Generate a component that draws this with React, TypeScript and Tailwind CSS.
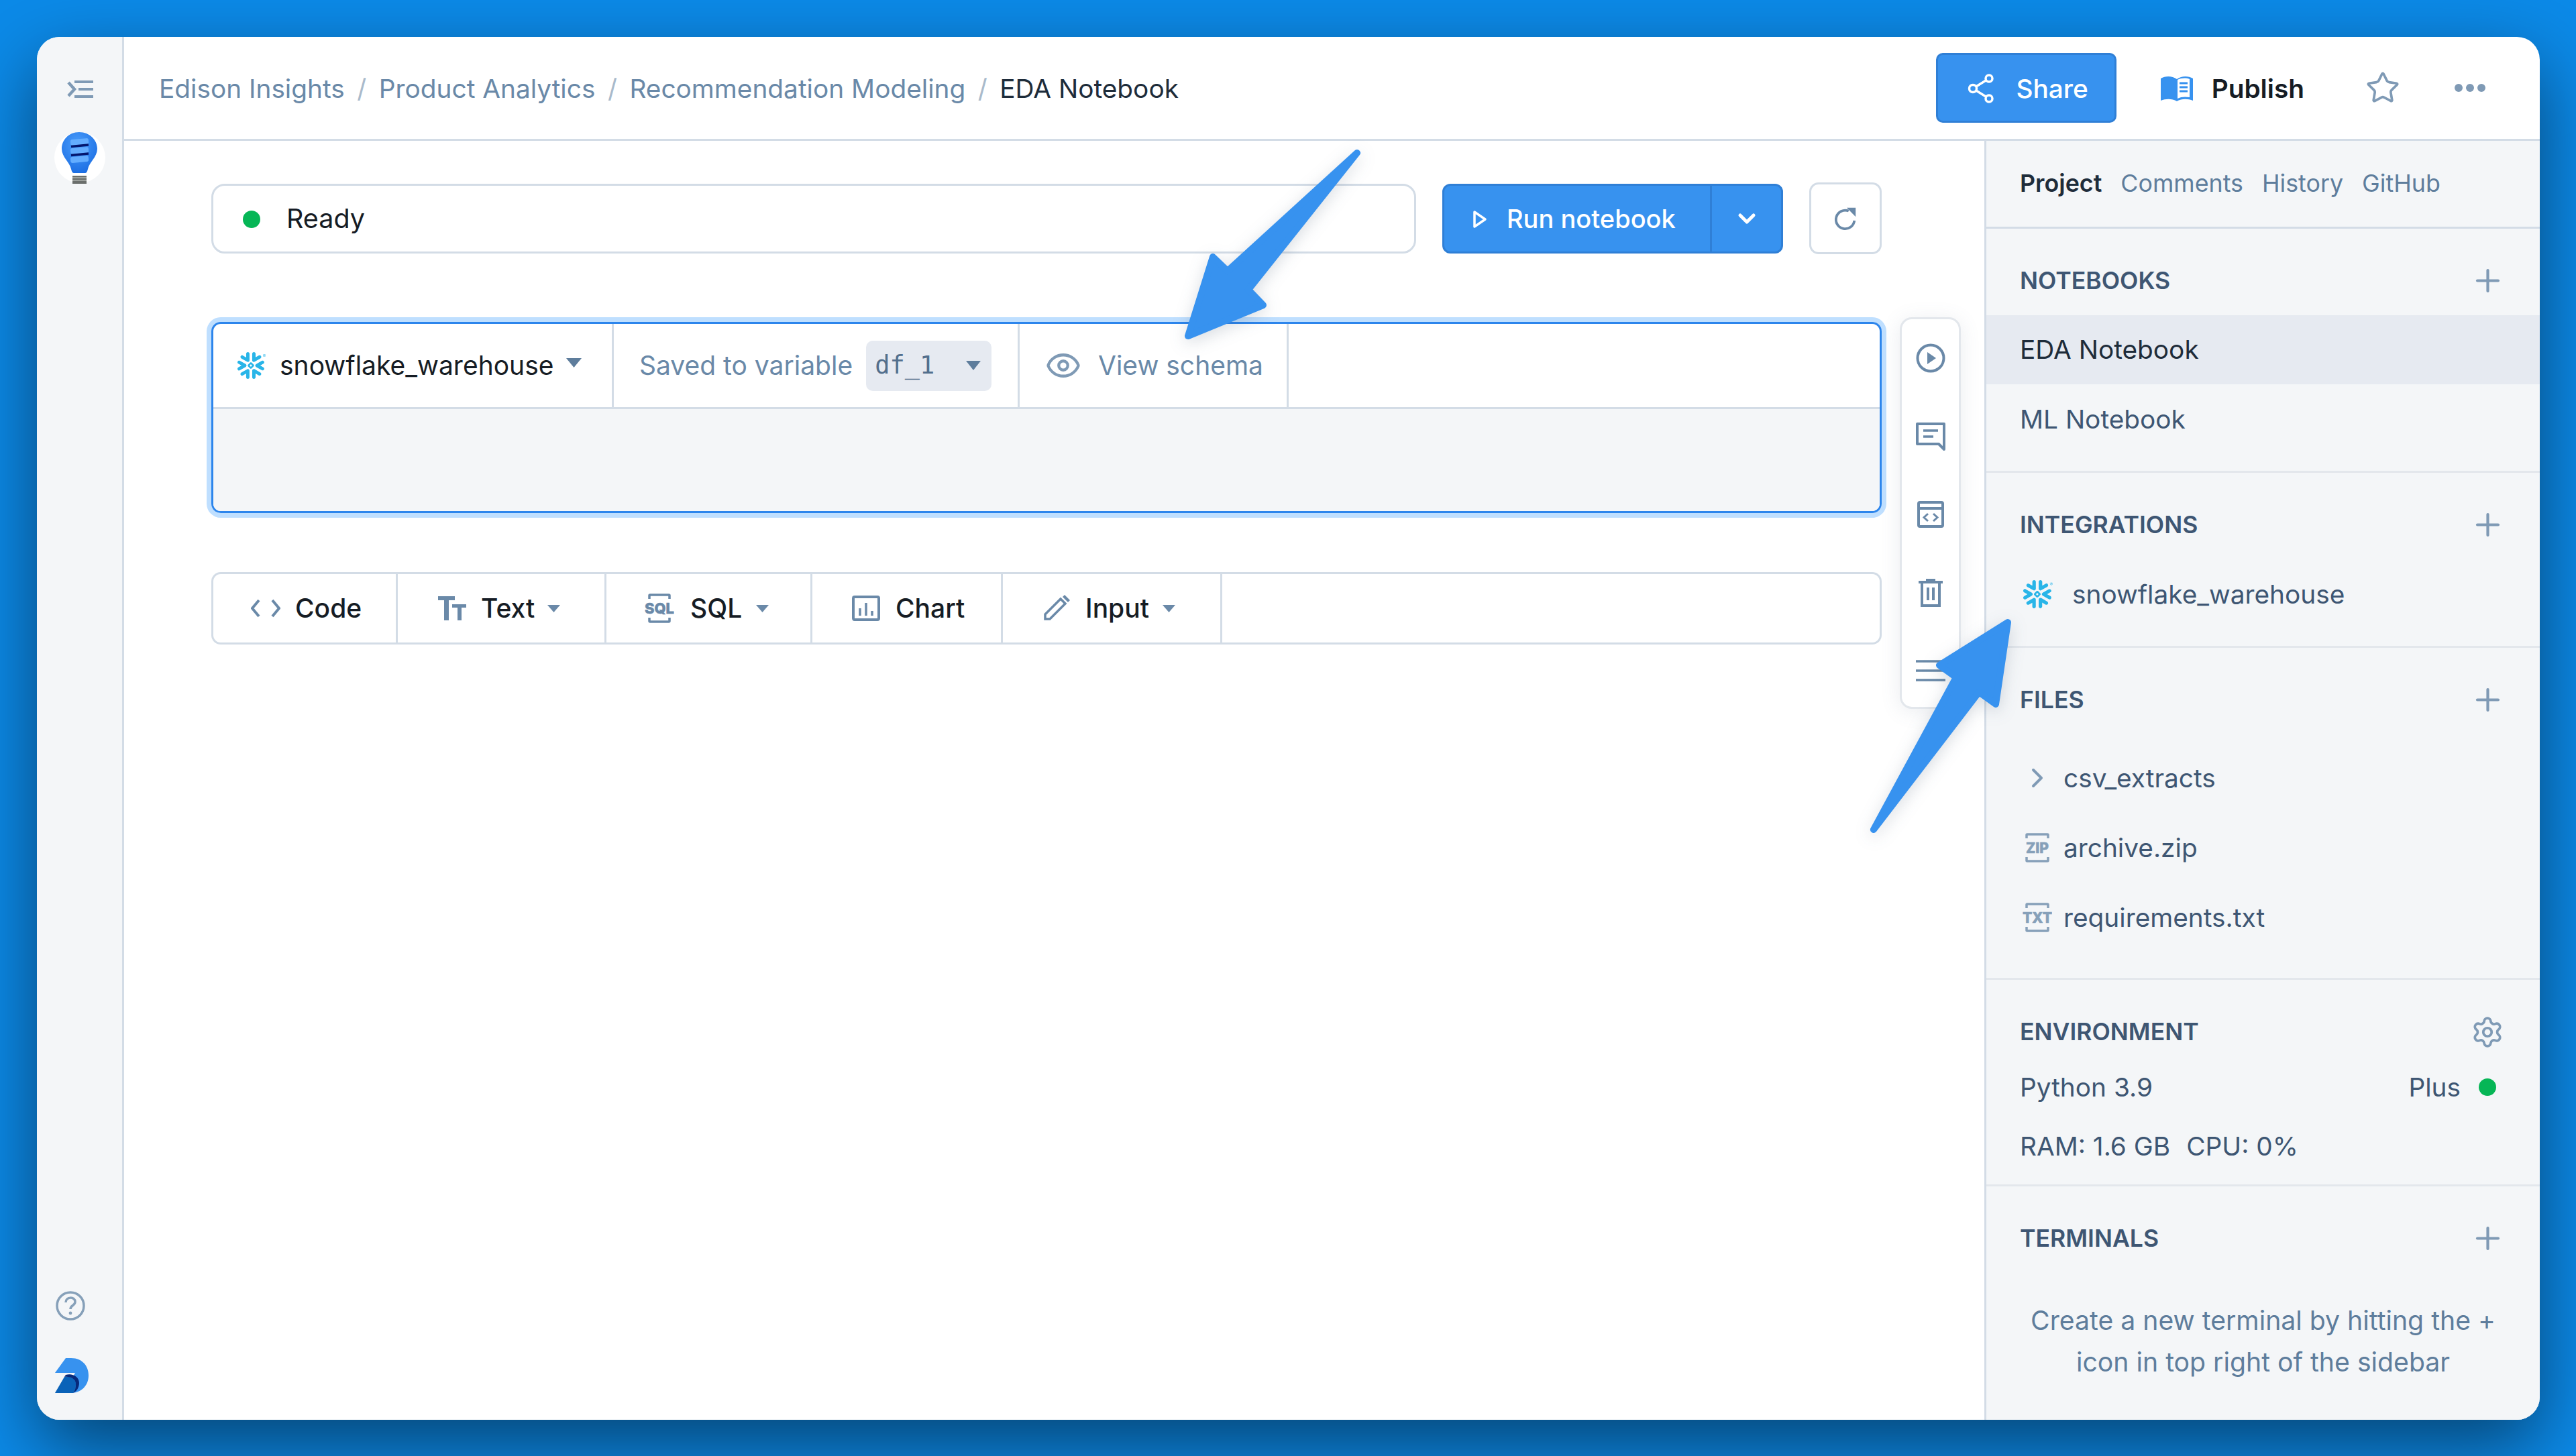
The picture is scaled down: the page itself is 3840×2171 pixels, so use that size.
import React from "react";
import { ChevronDown, ChevronRight, Eye, Plus, Settings, Star } from "lucide-react";
import { SiSnowflake } from "react-icons/si";

const Caret = ({ className }: { className: string }) => (
  <svg viewBox="0 0 10 8" preserveAspectRatio="none" className={className}>
    <path d="M0 0h10L5 8z" fill="currentColor" />
  </svg>
);

const Bulb = () => (
  <svg viewBox="0 0 80 80" className="h-[80px] w-[80px]">
    <defs>
      <radialGradient id="bulb" cx="0.45" cy="0.3" r="0.8">
        <stop offset="0" stopColor="#4a9dfb" />
        <stop offset="1" stopColor="#1668e0" />
      </radialGradient>
    </defs>
    <circle cx="40" cy="39" r="38" fill="#ffffff" />
    <path d="M39 1C23 1 13 13 13 26c0 12 12 20 14 30 1 4 2 6 4 6h17c2 0 3-2 4-6 2-10 14-18 14-30C66 13 55 1 39 1z" fill="url(#bulb)" />
    <rect x="26" y="11" width="27" height="9" rx="3" transform="rotate(-5 40 15)" fill="#63adff" />
    <rect x="26" y="24" width="27" height="9" rx="3" transform="rotate(-5 40 28)" fill="#63adff" />
    <rect x="26" y="37" width="27" height="9" rx="3" transform="rotate(-5 40 41)" fill="#63adff" />
    <path d="M27 22.500l26-2.500M27 35.500l26-2.500" stroke="#04176e" strokeWidth="3.5" />
    <rect x="29" y="66" width="21" height="12" fill="#6b6f6c" />
    <path d="M29 69h21M29 73h21" stroke="#aeb2ad" strokeWidth="1.5" />
  </svg>
);

const Logo = () => (
  <svg viewBox="0 0 50 52" className="h-[52px] w-[50px]">
    <path d="M16 0h8c15 0 26 10 26 26 0 15-11 26-26 26h-6l-2-5 14-25H0z" fill="#3792ef" />
    <path d="M0 52l14-24c8-2 17 2 17 11 0 6-2 10-4 13z" fill="#0a62b8" />
    <path d="M16 25c9-3 20 2 20 12 0 7-4 13-9 15 3-4 4-8 4-13 0-9-9-12-17-11z" fill="#07297a" />
  </svg>
);

const FileTag = ({ label, len }: { label: string; len: number }) => (
  <svg viewBox="0 0 44 44" className="h-[44px] w-[44px]">
    <path d="M6 8V3q0-1 1-1h30q1 0 1 1v5M6 36v5q0 1 1 1h30q1 0 1-1v-5" fill="none" stroke="currentColor" strokeWidth="3.5" />
    <text
      x="22"
      y="29.5"
      textAnchor="middle"
      textLength={len}
      lengthAdjust="spacingAndGlyphs"
      fontFamily="Inter, sans-serif"
      fontWeight="800"
      fontSize="21"
      fill="currentColor"
      stroke="currentColor"
      strokeWidth="0.6"
    >
      {label}
    </text>
  </svg>
);

const SectionHead = ({ title, icon }: { title: string; icon?: React.ReactNode }) => (
  <div className="flex h-[129px] items-center justify-between pt-[26px] pr-[51px] pl-[50px]">
    <span className="text-[35.6px] font-semibold text-[#3e5673]">{title}</span>
    {icon ?? <Plus className="h-[53px] w-[53px] text-[#7f9ab5]" strokeWidth={1.9} />}
  </div>
);

const ToolItem = ({ w, pad, icon, label, caret }: { w: string; pad: string; icon: React.ReactNode; label: string; caret?: boolean }) => (
  <div className={`${w} ${pad} flex h-full items-center border-r-[3px] border-[#d3dce6]`}>
    <span className="flex items-center text-[#6a89a8]">{icon}</span>
    <span className="text-[39px] font-medium text-[#161c24]">{label}</span>
    {caret && <Caret className="-ml-[3px] h-[11px] w-[19px] text-[#6a89a8]" />}
  </div>
);

export default function App() {
  return (
    <div className="relative h-[2171px] w-[3840px] overflow-hidden bg-[#0c8ae8] pt-[55px] pl-[55px] font-[Inter,sans-serif]">
      <div className="flex h-[2062px] w-[3731px] overflow-hidden rounded-[34px] bg-white shadow-[0_40px_110px_rgba(0,0,0,0.5)]">
        {/* left rail */}
        <div className="flex w-[130px] shrink-0 flex-col items-center border-r-[3px] border-[#d3dce6] bg-[#f4f6f8] pt-[65px] pb-[40px]">
          <svg viewBox="0 0 40 26" className="h-[26px] w-[40px] text-[#7f9ab5]">
            <path d="M3 3l9 10-9 10" fill="none" stroke="currentColor" strokeWidth="4.5" />
            <path d="M12 2h28M18 13h22M12 24h28" stroke="currentColor" strokeWidth="4" />
          </svg>
          <div className="mt-[50px]">
            <Bulb />
          </div>
          <svg viewBox="0 0 44 44" className="mt-auto ml-[28px] h-[44px] w-[44px] self-start text-[#86a0b9]">
            <circle cx="22" cy="22" r="20" fill="none" stroke="currentColor" strokeWidth="3.5" />
            <path d="M15 17c0-9 14-9 14-1 0 6-7 5-7 11" fill="none" stroke="currentColor" strokeWidth="3.5" />
            <circle cx="22" cy="33" r="2.4" fill="currentColor" />
          </svg>
          <div className="mt-[56px] ml-[27px] self-start">
            <Logo />
          </div>
        </div>

        <div className="flex min-w-0 flex-1 flex-col">
          {/* header */}
          <div className="flex h-[155px] shrink-0 items-center border-b-[3px] border-[#d3dce6] pr-[81px] pl-[52px] text-[38.8px] text-[#6a89a8]">
            <div className="flex items-center pt-[3px]">
              <span>Edison Insights</span>
              <span className="mx-[18.5px] text-[#a9bacb]">/</span>
              <span>Product Analytics</span>
              <span className="mx-[18.5px] text-[#a9bacb]">/</span>
              <span>Recommendation Modeling</span>
              <span className="mx-[18.5px] text-[#a9bacb]">/</span>
              <span className="text-[#1e2c3a]">EDA Notebook</span>
            </div>

            <div className="ml-auto flex h-[104px] w-[269px] items-center justify-center gap-[32px] rounded-[10px] border-[3px] border-[#2f7fd6] bg-[#3792ef] pt-[2px] pl-[6px] font-medium text-white">
              <svg viewBox="0 0 40 44" className="h-[44px] w-[40px]">
                <path d="M8 22L32 7M8 22l24 15" stroke="currentColor" strokeWidth="3.5" />
                <circle cx="8" cy="22" r="5.5" fill="#3792ef" stroke="currentColor" strokeWidth="3.5" />
                <circle cx="32" cy="7" r="5" fill="#3792ef" stroke="currentColor" strokeWidth="3.5" />
                <circle cx="32" cy="37" r="5" fill="#3792ef" stroke="currentColor" strokeWidth="3.5" />
              </svg>
              <span>Share</span>
            </div>
            <div className="ml-[66px] flex items-center gap-[28px] pt-[2px] font-semibold text-[#161c24]">
              <svg viewBox="0 0 48 38" className="h-[38px] w-[48px]">
                <path d="M0 4c7-4 17-4 24 1 7-5 17-5 24-1v33c-8-3-17-3-24 1-7-4-16-4-24-1z" fill="#3792ef" />
                <path d="M25 6c6-3 13-3 18-1v27c-6-1-13-1-18 2z" fill="#ffffff" />
                <path d="M28 11h12M28 17h12M28 23h12" stroke="#3792ef" strokeWidth="3" />
              </svg>
              <span>Publish</span>
            </div>
            <Star className="ml-[91px] h-[52px] w-[52px] text-[#7f9ab5]" strokeWidth={1.7} />
            <div className="ml-[81px] flex gap-[5px]">
              <span className="h-[12px] w-[12px] rounded-full bg-[#7f9ab5]" />
              <span className="h-[12px] w-[12px] rounded-full bg-[#7f9ab5]" />
              <span className="h-[12px] w-[12px] rounded-full bg-[#7f9ab5]" />
            </div>
          </div>

          <div className="flex min-h-0 flex-1">
            {/* notebook */}
            <div className="min-w-0 flex-1 pt-[62px] pl-[130px]">
              <div className="flex w-[2490px] items-center">
                <div className="flex h-[104px] w-[1796px] items-center rounded-[20px] border-[3px] border-[#d3dce6] pt-[2px] pl-[44px]">
                  <span className="h-[26px] w-[26px] rounded-full bg-[#06b656]" />
                  <span className="ml-[39px] text-[39.5px] text-[#161c24]">Ready</span>
                </div>
                <div className="ml-[39px] flex h-[104px] w-[508px] items-center rounded-[12px] border-[3px] border-[#2f7fd6] bg-[#3792ef] text-white">
                  <div className="flex h-full w-[399px] items-center border-r-[3px] border-[#2f7fd6] pt-[2px] pl-[42px]">
                    <svg viewBox="0 0 22 28" className="h-[28px] w-[22px]">
                      <path d="M3 3l16 11L3 25z" fill="none" stroke="currentColor" strokeWidth="3.5" strokeLinejoin="round" />
                    </svg>
                    <span className="ml-[29px] text-[38px] font-medium">Run notebook</span>
                  </div>
                  <div className="flex flex-1 items-center justify-center">
                    <ChevronDown className="h-[40px] w-[40px]" strokeWidth={3} />
                  </div>
                </div>
                <div className="ml-[39px] flex h-[107px] w-[108px] items-center justify-center rounded-[14px] border-[3px] border-[#d3dce6]">
                  <svg viewBox="0 0 40 40" className="h-[38px] w-[38px] text-[#6a89a8]">
                    <path d="M34 23A14.5 14.5 0 1 1 25 8" fill="none" stroke="currentColor" strokeWidth="4" />
                    <path d="M22 3h14v14z" fill="currentColor" />
                  </svg>
                </div>
              </div>

              {/* cell */}
              <div className="relative mt-[101px] w-[2490px]">
                <div className="h-[285px] overflow-hidden rounded-[14px] border-[3px] border-[#2c85ec] shadow-[0_0_0_7px_#bfdfff]">
                  <div className="flex h-[127px] items-stretch border-b-[3px] border-[#d3dce6] text-[39px]">
                    <div className="flex w-[597px] items-center border-r-[3px] border-[#d3dce6] pl-[36px]">
                      <SiSnowflake className="h-[42px] w-[42px] text-[#29b5e8]" />
                      <span className="ml-[21px] text-[#161c24]">snowflake_warehouse</span>
                      <Caret className="mt-[-8px] ml-[19px] h-[14px] w-[23px] text-[#5e7d9c]" />
                    </div>
                    <div className="flex w-[605px] items-center border-r-[3px] border-[#d3dce6] pl-[38px] text-[#6a89a8]">
                      <span>Saved to variable</span>
                      <div className="ml-[20px] flex h-[75px] w-[187px] items-center rounded-[10px] bg-[#e6eaf1] pl-[13px] font-['DejaVu_Sans_Mono',monospace] text-[37px] text-[#536f8c]">
                        <span>df_1</span>
                        <Caret className="ml-[47px] h-[14px] w-[22px] text-[#5e7d9c]" />
                      </div>
                    </div>
                    <div className="flex w-[401px] items-center border-r-[3px] border-[#d3dce6] pl-[38px] text-[#6a89a8]">
                      <Eye className="h-[54px] w-[54px] text-[#7f9ab5]" strokeWidth={1.9} />
                      <span className="ml-[25px]">View schema</span>
                    </div>
                  </div>
                  <div className="h-full bg-[#f4f6f8]" />
                </div>

                {/* floating cell actions */}
                <div className="absolute -top-[7px] left-full ml-[27px] flex h-[584px] w-[91px] flex-col items-center justify-between rounded-[18px] border-[3px] border-[#e3e7ec] bg-white pt-[36px] pb-[32px] text-[#6a89a8] shadow-[0_4px_30px_rgba(90,110,130,0.12)]">
                  <svg viewBox="0 0 44 44" className="h-[44px] w-[44px]">
                    <circle cx="22" cy="22" r="19.5" fill="none" stroke="currentColor" strokeWidth="4" />
                    <path d="M17 13l13 9-13 9z" fill="currentColor" />
                  </svg>
                  <svg viewBox="0 0 44 44" className="h-[44px] w-[44px]">
                    <path d="M2 3h40v38l-8-8H2z" fill="none" stroke="currentColor" strokeWidth="4" strokeLinejoin="round" />
                    <path d="M11 13h22M11 22h15" stroke="currentColor" strokeWidth="3.5" />
                  </svg>
                  <svg viewBox="0 0 44 44" className="h-[44px] w-[44px]">
                    <rect x="4" y="4" width="36" height="36" rx="2" fill="none" stroke="currentColor" strokeWidth="4" />
                    <path d="M4 13h36" stroke="currentColor" strokeWidth="4" />
                    <path d="M18 21l-6 5.500 6 5.500M26 21l6 5.500-6 5.500" fill="none" stroke="currentColor" strokeWidth="3" />
                  </svg>
                  <svg viewBox="0 0 44 44" className="h-[44px] w-[44px]">
                    <path d="M4 6h36M9 6v35h26V6M15 3h14M18 14v19M26 14v19" fill="none" stroke="currentColor" strokeWidth="4" />
                  </svg>
                  <svg viewBox="0 0 44 44" className="h-[44px] w-[44px]">
                    <path d="M0 8h44M0 22h44M0 36h44" stroke="currentColor" strokeWidth="3.5" />
                  </svg>
                </div>
              </div>

              {/* add cell toolbar */}
              <div className="mt-[88px] flex h-[108px] w-[2490px] items-center overflow-hidden rounded-[14px] border-[3px] border-[#d3dce6]">
                <ToolItem
                  w="w-[275px]"
                  pad="gap-[22px] pl-[56px]"
                  label="Code"
                  icon={
                    <svg viewBox="0 0 44 28" className="h-[28px] w-[44px]">
                      <path d="M12 2L2 14l10 12M32 2l10 12-10 12" fill="none" stroke="currentColor" strokeWidth="4" />
                    </svg>
                  }
                />
                <ToolItem
                  w="w-[311px]"
                  pad="gap-[22px] pl-[60px]"
                  label="Text"
                  caret
                  icon={
                    <svg viewBox="0 0 42 36" className="h-[36px] w-[42px]">
                      <path d="M0 0h25v6H16v30H9V6H0zM21 12h21v5h-7v19h-6V17h-8z" fill="currentColor" />
                    </svg>
                  }
                />
                <ToolItem
                  w="w-[307px]"
                  pad="gap-[24px] pl-[57px]"
                  label="SQL"
                  caret
                  icon={
                    <svg viewBox="0 0 44 44" className="h-[44px] w-[44px]">
                      <path d="M7 8V3q0-1 1-1h28q1 0 1 1v5M7 36v5q0 1 1 1h28q1 0 1-1v-5" fill="none" stroke="currentColor" strokeWidth="3.5" />
                      <text
                        x="22"
                        y="30"
                        textAnchor="middle"
                        textLength={44}
                        lengthAdjust="spacingAndGlyphs"
                        fontFamily="Inter, sans-serif"
                        fontWeight="800"
                        fontSize="22"
                        fill="currentColor"
                        stroke="currentColor"
                        strokeWidth="0.6"
                      >
                        SQL
                      </text>
                    </svg>
                  }
                />
                <ToolItem
                  w="w-[284px]"
                  pad="gap-[23px] pl-[59px]"
                  label="Chart"
                  icon={
                    <svg viewBox="0 0 42 38" className="h-[38px] w-[42px]">
                      <rect x="2" y="2" width="38" height="34" rx="2" fill="none" stroke="currentColor" strokeWidth="4" />
                      <path d="M12 19v11M21 11v19M30 23v7" stroke="currentColor" strokeWidth="3.5" />
                    </svg>
                  }
                />
                <ToolItem
                  w="w-[327px]"
                  pad="gap-[23px] pl-[60px]"
                  label="Input"
                  caret
                  icon={
                    <svg viewBox="0 0 40 40" className="h-[40px] w-[40px]">
                      <path d="M3 29L26 6l7 7-23 23H3z" fill="none" stroke="currentColor" strokeWidth="3.5" />
                      <path d="M29 3l3-3 8 8-3 3z" fill="currentColor" />
                    </svg>
                  }
                />
              </div>
            </div>

            {/* right sidebar */}
            <div className="flex w-[828px] shrink-0 flex-col border-l-[3px] border-[#d3dce6] bg-[#f4f6f8] text-[38.8px] text-[#3e5673]">
              <div className="flex h-[131px] items-center gap-[28px] border-b-[3px] border-[#d3dce6] pl-[50px] text-[35.8px] text-[#5e7d9c]">
                <span className="font-semibold text-[#1e2c3a]">Project</span>
                <span>Comments</span>
                <span>History</span>
                <span>GitHub</span>
              </div>

              <div className="border-b-[3px] border-[#e3e7ec] pb-[25px]">
                <SectionHead title="NOTEBOOKS" />
                <div className="flex h-[103px] items-center bg-[#e6eaf1] pl-[50px] text-[#1e2c3a]">EDA Notebook</div>
                <div className="flex h-[104px] items-center pl-[50px]">ML Notebook</div>
              </div>

              <div className="border-b-[3px] border-[#e3e7ec] pb-[25px]">
                <SectionHead title="INTEGRATIONS" />
                <div className="flex h-[104px] items-center pl-[55px]">
                  <SiSnowflake className="h-[44px] w-[44px] text-[#29b5e8]" />
                  <span className="ml-[29px]">snowflake_warehouse</span>
                </div>
              </div>

              <div className="border-b-[3px] border-[#e3e7ec] pb-[38px]">
                <SectionHead title="FILES" />
                <div className="mt-[13px] flex h-[104px] items-center pl-[50px]">
                  <span className="flex w-[52px] justify-center text-[#7f9ab5]">
                    <ChevronRight className="h-[48px] w-[48px]" strokeWidth={2} />
                  </span>
                  <span className="ml-[13px]">csv_extracts</span>
                </div>
                <div className="flex h-[104px] items-center pl-[50px]">
                  <span className="flex w-[52px] justify-center text-[#86a0b9]">
                    <FileTag label="ZIP" len={34} />
                  </span>
                  <span className="ml-[13px]">archive.zip</span>
                </div>
                <div className="flex h-[104px] items-center pl-[50px]">
                  <span className="flex w-[52px] justify-center text-[#86a0b9]">
                    <FileTag label="TXT" len={44} />
                  </span>
                  <span className="ml-[13px]">requirements.txt</span>
                </div>
              </div>

              <div className="border-b-[3px] border-[#e3e7ec] pb-[26px]">
                <SectionHead title="ENVIRONMENT" icon={<Settings className="mr-[2px] h-[50px] w-[50px] text-[#7f9ab5]" strokeWidth={1.8} />} />
                <div className="flex h-[62px] items-center justify-between pr-[65px] pl-[50px]">
                  <span>Python 3.9</span>
                  <div className="flex items-center gap-[27px]">
                    <span>Plus</span>
                    <span className="h-[26px] w-[26px] rounded-full bg-[#06b656]" />
                  </div>
                </div>
                <div className="mt-[26px] flex h-[62px] items-center gap-[24px] pl-[50px]">
                  <span>RAM: 1.6 GB</span>
                  <span>CPU: 0%</span>
                </div>
              </div>

              <div>
                <SectionHead title="TERMINALS" />
                <p className="mt-[40px] px-[30px] text-center text-[39.2px] leading-[62px] text-[#5e7d9c]">
                  Create a new terminal by hitting the +
                  <br />
                  icon in top right of the sidebar
                </p>
              </div>
            </div>
          </div>
        </div>
      </div>

      {/* annotation arrows */}
      <svg className="pointer-events-none absolute inset-0 h-[2171px] w-[3840px] drop-shadow-[0_6px_12px_rgba(40,60,90,0.18)]" viewBox="0 0 3840 2171">
        <path
          d="M2023 228L1861 432L1883 455L1771 501L1808 383L1830 404Z"
          fill="#3792ef"
          stroke="#3792ef"
          strokeWidth="10"
          strokeLinejoin="round"
        />
        <path
          d="M2993 928L2975 1050L2950 1032L2793 1237L2916 1010L2891 992Z"
          fill="#3792ef"
          stroke="#3792ef"
          strokeWidth="10"
          strokeLinejoin="round"
        />
      </svg>
    </div>
  );
}
